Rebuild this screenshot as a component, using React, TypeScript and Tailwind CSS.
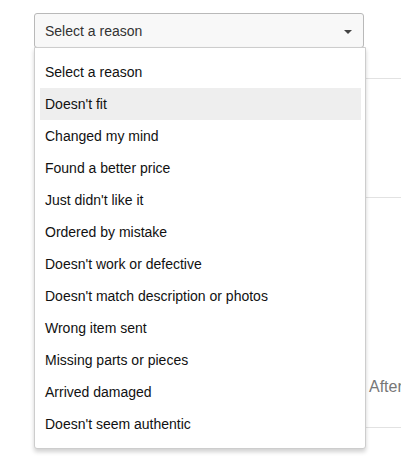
import React from "react";

const reasons = [
  "Select a reason",
  "Doesn't fit",
  "Changed my mind",
  "Found a better price",
  "Just didn't like it",
  "Ordered by mistake",
  "Doesn't work or defective",
  "Doesn't match description or photos",
  "Wrong item sent",
  "Missing parts or pieces",
  "Arrived damaged",
  "Doesn't seem authentic",
];

export default function App() {
  return (
    <div
      className="relative w-[401px] h-[472px] overflow-hidden bg-white pt-[13px]"
      style={{ fontFamily: '"Liberation Sans", Arial, sans-serif' }}
    >
      {/* select control */}
      <div className="ml-[34px] w-[330px] h-[35px] flex items-center justify-between pl-[10px] pr-[11px] pt-[2px] border border-[#b9b9b9] rounded-[3px] bg-[#f8f8f8] text-[14px] text-[#333]">
        <span>Select a reason</span>
        <span className="w-0 h-0 border-l-[4px] border-r-[4px] border-t-[4px] border-l-transparent border-r-transparent border-t-[#444] mt-[1px]" />
      </div>

      {/* page content behind the menu */}
      <div className="mt-[30px] ml-[365px] border-t border-[#e2e2e2] h-[119px]" />
      <div className="ml-[365px] border-t border-b border-[#e2e2e2] pt-[177px] pb-[28px] pl-[4px] text-[16px] leading-[24px] text-[#777] whitespace-nowrap">
        After
      </div>

      {/* dropdown menu */}
      <div className="absolute left-[34px] top-[47px] w-[332px] bg-white border border-[#cdcdcd] rounded-b-[3px] shadow-[0_3px_4px_rgba(0,0,0,0.18)] py-[8px] pl-[5px] pr-[4px]">
        {reasons.map((r, i) => (
          <div
            key={r}
            className={
              i === 1
                ? "h-[32px] flex items-center pl-[5px] text-[14px] text-[#111] bg-[#eeeeee]"
                : "h-[32px] flex items-center pl-[5px] text-[14px] text-[#111]"
            }
          >
            {r}
          </div>
        ))}
      </div>
    </div>
  );
}
